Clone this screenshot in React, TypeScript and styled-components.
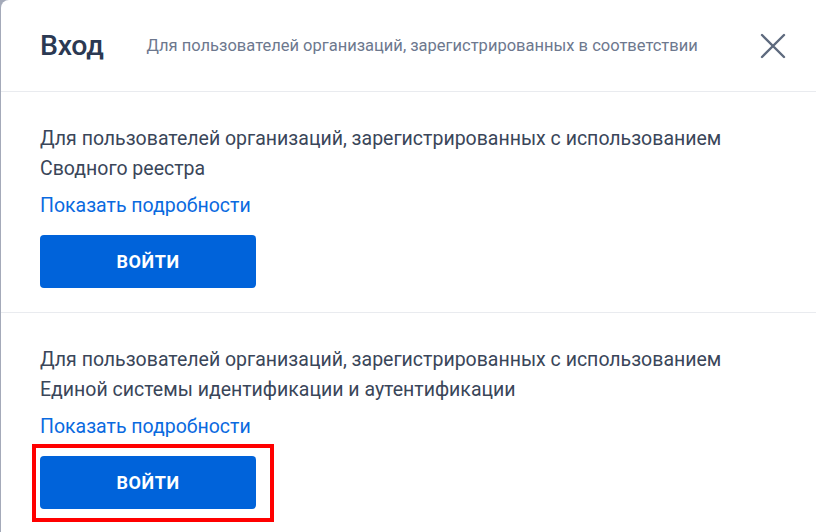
import React from "react";
import styled, { createGlobalStyle } from "styled-components";

const Global = createGlobalStyle`
  html, body { margin: 0; padding: 0; background: #a4aab9; }
  body { font-family: Roboto, "Noto Sans", "Liberation Sans", sans-serif; }
  * { box-sizing: border-box; }
`;

const Modal = styled.div`
  margin-left: 1px;
  width: 815px;
  height: 532px;
  background: #ffffff;
  border-top-left-radius: 8px;
  overflow: hidden;
  display: flex;
  flex-direction: column;
`;

const Header = styled.div`
  flex-shrink: 0;
  height: 92px;
  display: flex;
  align-items: center;
  padding: 0 28px 0 39px;
  border-bottom: 1px solid #e9ebef;
`;

const Title = styled.h1`
  margin: 0;
  font-size: 28.5px;
  font-weight: 500;
  color: #2b3952;
  letter-spacing: -0.3px;
  margin-right: 43px;
`;

const Subtitle = styled.div`
  flex: 1;
  font-size: 16.5px;
  color: #6d788e;
  white-space: nowrap;
`;

const Close = styled.button`
  border: none;
  background: none;
  padding: 0;
  width: 30px;
  height: 30px;
  display: flex;
  align-items: center;
  justify-content: center;
  cursor: pointer;
`;

const Section = styled.div<{ $last?: boolean }>`
  flex-shrink: 0;
  padding: 32px 39px 24px;
  border-bottom: ${(p) => (p.$last ? "none" : "1px solid #e9ebef")};
  display: flex;
  flex-direction: column;
  align-items: flex-start;
`;

const Text = styled.p`
  margin: 0;
  font-size: 19.5px;
  line-height: 30px;
  color: #3a4659;
`;

const Link = styled.a`
  margin-top: 8px;
  font-size: 19.5px;
  line-height: 28px;
  color: #0a6adf;
  text-decoration: none;
  cursor: pointer;
`;

const ButtonWrap = styled.div`
  position: relative;
  margin-top: 15px;
`;

const Button = styled.button`
  width: 216px;
  height: 53px;
  border: none;
  border-radius: 4px;
  background: #0063da;
  color: #ffffff;
  font-family: Roboto, "Noto Sans", sans-serif;
  font-size: 18px;
  font-weight: 700;
  letter-spacing: 0.6px;
  text-transform: uppercase;
  cursor: pointer;
`;

const Highlight = styled.div`
  position: absolute;
  left: -8px;
  top: -12px;
  width: 242px;
  height: 78px;
  border: 4px solid #ff0000;
  pointer-events: none;
`;

const CloseIcon = () => (
  <svg width="26" height="26" viewBox="0 0 26 26">
    <path d="M2 2 L24 24 M24 2 L2 24" stroke="#5e6a7e" strokeWidth="2.4" strokeLinecap="round" fill="none" />
  </svg>
);

const items = [
  {
    lines: ["Для пользователей организаций, зарегистрированных с использованием", "Сводного реестра"],
    highlight: false,
  },
  {
    lines: [
      "Для пользователей организаций, зарегистрированных с использованием",
      "Единой системы идентификации и аутентификации",
    ],
    highlight: true,
  },
];

export default function App() {
  return (
    <>
      <Global />
      <Modal>
        <Header>
          <Title>Вход</Title>
          <Subtitle>Для пользователей организаций, зарегистрированных в соответствии</Subtitle>
          <Close aria-label="Закрыть">
            <CloseIcon />
          </Close>
        </Header>
        {items.map((it, i) => (
          <Section key={i} $last={i === items.length - 1}>
            <Text>
              {it.lines[0]}
              <br />
              {it.lines[1]}
            </Text>
            <Link>Показать подробности</Link>
            <ButtonWrap>
              <Button>Войти</Button>
              {it.highlight && <Highlight />}
            </ButtonWrap>
          </Section>
        ))}
      </Modal>
    </>
  );
}
